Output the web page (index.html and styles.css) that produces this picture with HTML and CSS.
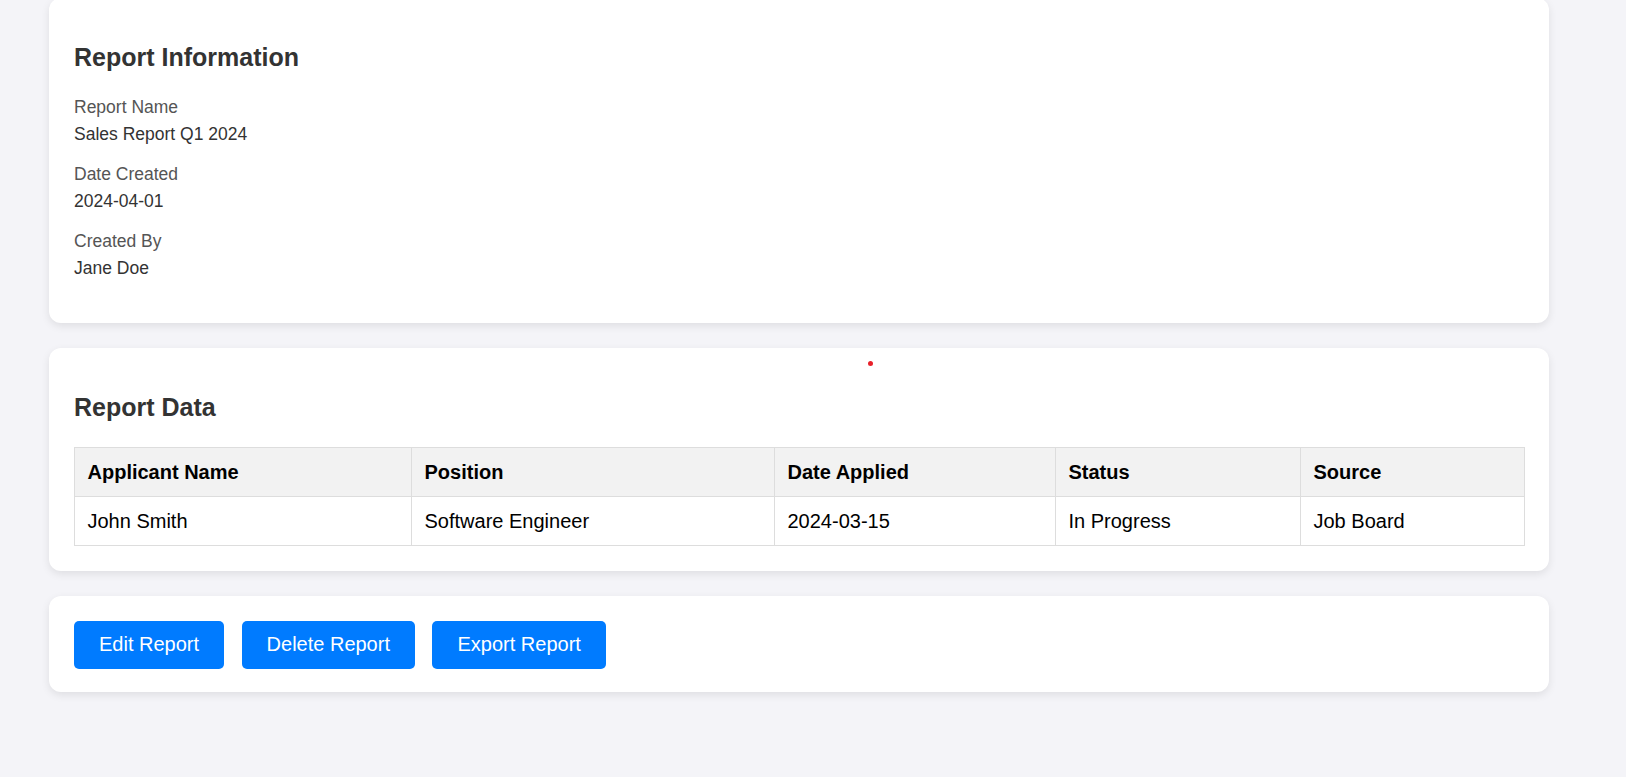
FILE: index.html
```html
<!DOCTYPE html>
<html lang="en">
<head>
<meta charset="utf-8">
<title>Report Details</title>
<link rel="stylesheet" href="styles.css">
</head>
<body>
<div class="page">
  <section class="card card-info">
    <h2>Report Information</h2>
    <div class="fields">
      <div class="field">
        <div class="label">Report Name</div>
        <div class="value">Sales Report Q1 2024</div>
      </div>
      <div class="field">
        <div class="label">Date Created</div>
        <div class="value">2024-04-01</div>
      </div>
      <div class="field">
        <div class="label">Created By</div>
        <div class="value">Jane Doe</div>
      </div>
    </div>
  </section>

  <section class="card card-data">
    <span class="marker"></span>
    <h2>Report Data</h2>
    <table class="data-table">
      <colgroup>
        <col class="c1"><col class="c2"><col class="c3"><col class="c4"><col class="c5">
      </colgroup>
      <thead>
        <tr>
          <th>Applicant Name</th>
          <th>Position</th>
          <th>Date Applied</th>
          <th>Status</th>
          <th>Source</th>
        </tr>
      </thead>
      <tbody>
        <tr>
          <td>John Smith</td>
          <td>Software Engineer</td>
          <td>2024-03-15</td>
          <td>In Progress</td>
          <td>Job Board</td>
        </tr>
      </tbody>
    </table>
  </section>

  <section class="card card-actions">
    <div class="actions">
      <button class="btn">Edit Report</button>
      <button class="btn">Delete Report</button>
      <button class="btn">Export Report</button>
    </div>
  </section>
</div>
</body>
</html>
```

FILE: styles.css
```css
* { box-sizing: border-box; }

html, body {
  margin: 0;
  padding: 0;
}

body {
  background: #f4f4f8;
  font-family: "Liberation Sans", Arial, sans-serif;
  font-size: 20px;
  color: #333;
  overflow: hidden;
}

.page {
  padding: 0 0 40px 49px;
  margin-top: -2px;
}

.card {
  position: relative;
  width: 1500px;
  background: #fff;
  border-radius: 12px;
  padding: 25px;
  margin-bottom: 25px;
  box-shadow: 0 3px 9px rgba(0, 0, 0, 0.09);
}

.card-actions {
  padding: 24.5px 25px 23.5px;
}

.card h2 {
  margin: 20px 0 22px;
  font-size: 25px;
  font-weight: bold;
  color: #333;
  line-height: normal;
}

.card-data h2 {
  margin-bottom: 25px;
}

.fields {
  padding-bottom: 3px;
}

.field {
  margin-bottom: 13px;
  font-size: 17.5px;
  line-height: 27px;
}

.label {
  color: #555;
}

.value {
  color: #333;
}

.marker {
  position: absolute;
  left: 819px;
  top: 13px;
  width: 5px;
  height: 5px;
  border-radius: 50%;
  background: #e8202a;
}

.data-table {
  width: 100%;
  border-collapse: collapse;
  table-layout: fixed;
  font-size: 20px;
  color: #000;
}

.data-table .c1 { width: 337px; }
.data-table .c2 { width: 363px; }
.data-table .c3 { width: 281px; }
.data-table .c4 { width: 245px; }
.data-table .c5 { width: 224px; }

.data-table th,
.data-table td {
  border: 1px solid #ddd;
  padding: 12.5px 12.5px;
  text-align: left;
  line-height: 23px;
}

.data-table th {
  background: #f2f2f2;
  font-weight: bold;
}

.actions {
  display: flex;
  gap: 17.5px;
}

.btn {
  font-family: "Liberation Sans", Arial, sans-serif;
  font-size: 20px;
  line-height: 23px;
  padding: 12.5px 25px;
  background: #007bff;
  color: #fff;
  border: none;
  border-radius: 5px;
  cursor: pointer;
}
```
